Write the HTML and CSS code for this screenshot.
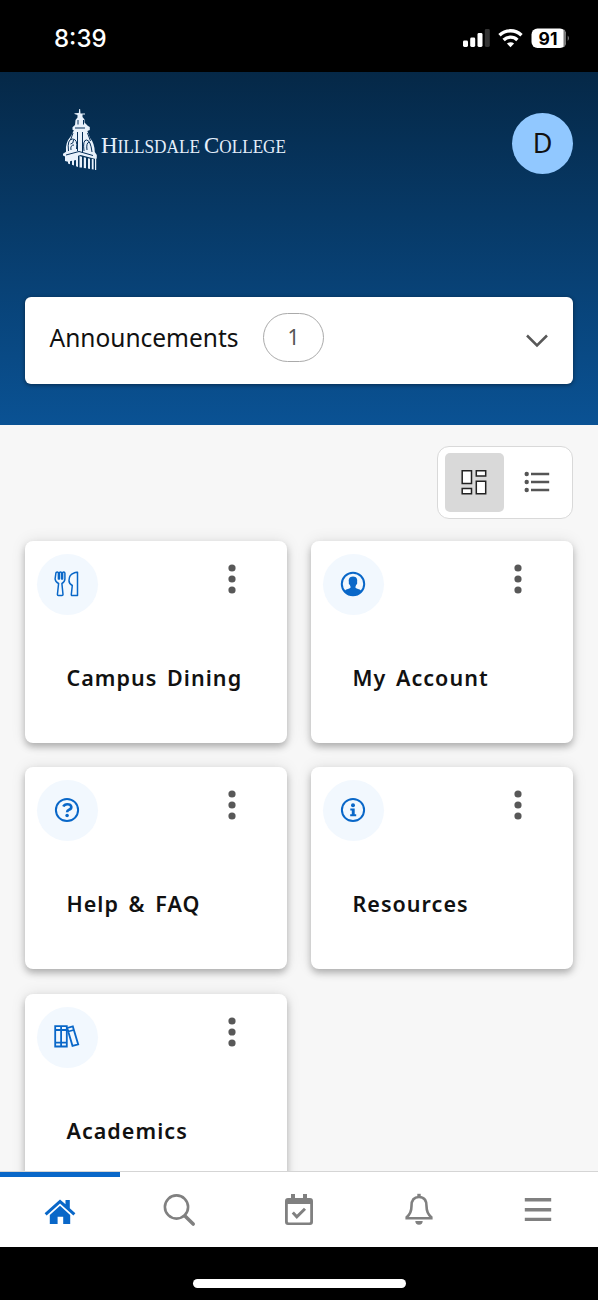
FILE: index.html
```
<!DOCTYPE html>
<html lang="en">
<head>
<meta charset="utf-8">
<title>Hillsdale College</title>
<link rel="stylesheet" href="styles.css">
</head>
<body>
<svg width="0" height="0" class="defs">
  <symbol id="dots" viewBox="0 0 8 30"><circle cx="4" cy="4" r="3.6"/><circle cx="4" cy="15" r="3.6"/><circle cx="4" cy="26" r="3.6"/></symbol>
</svg>
<div class="phone">
  <div class="status">
    <span class="time">8:39</span>
    <svg class="signals" width="108" height="24" viewBox="0 0 108 24">
      <g fill="#fff">
        <rect x="3" y="13.5" width="5" height="6.5" rx="1.4"/>
        <rect x="10.200" y="10.500" width="5" height="9.500" rx="1.400"/>
        <rect x="17.500" y="6" width="5" height="14" rx="1.400"/>
        <rect x="24.800" y="2" width="5" height="18" rx="1.400" fill="#333"/>
        <path d="M50.500 20.200l-3.600-3.600a5.200 5.200 0 0 1 7.200 0z"/>
        <rect x="71.500" y="1.500" width="34.500" height="19.500" rx="6"/>
        <path d="M103.500 2v18.500q2.500-1.500 2.500-5.500V7.500q0-4-2.500-5.500z" fill="#777"/>
        <path d="M107.700 8.500q2.600 2.500 0 5.500z" fill="#777"/>
      </g>
      <g fill="none" stroke="#fff" stroke-width="3.400">
        <path d="M39.500 8.200a16 16 0 0 1 22 0"/><path d="M43.600 12.900a10 10 0 0 1 13.800 0"/>
      </g>
      <text x="88" y="17.800" text-anchor="middle" class="battery">91</text>
    </svg>
  </div>
  <header class="hero">
    <div class="brand-row">
      <svg class="logo" width="230" height="64" viewBox="0 0 230 64">
        <g fill="#e8f1fb">
          <path d="M17.200 1h.9l.4 4.500h4.500v1h-2.500v2.500l2 2.500v3l3.500 3.500 1.800 1v3l-3 1.200h-11l-3.300-1.400v-2.600l2.500-2.200.5-5 2-2.500V7l-3-1v-.8l4.300-.2z"/>
          <path d="M12 22h13l3 8q4.500 5 4.800 14l2 3v3.500l-1.200.5-15-4L3 52v-3.500l-2-1v-1.800l3-2Q2.800 35 9 28z"/>
          <path d="M3 51l13-4v12l-2-.8V52l-2 .5v5l-2-.8v-4l-2 .5v3l-2-.7v-1.700l-3-.8zM17.500 48l2.500.7v10.800h-2.500zM21.800 49.200l2.200.6v10.500l-2.200-.3zM26 50.300l2 .5v10.200l-2-.5zM29.800 50.800l1.800.4v10.300l-1.800-.3zM33 50.500l1.200.2V62H33z"/>
        </g>
        <g fill="none" stroke="#052e58" stroke-width="1">
          <path d="M16 12v4.500M21.500 12v4.500M13 20h10"/>
          <path d="M11 25l-2.500 7M15.500 24v19M20.500 24v20M25.500 25l3 8M6.500 43q-1.500-12 4-12t4 10M8.500 36q3 0 3-4M9 42q-1-5 3-5M22 43q-1.500-11 2.500-11t5.500 12M25 42q-1-7 2-8M4 47l13-3.500 14 4"/>
        </g>
        <text class="wordmark" x="39" y="45.200" textLength="99" lengthAdjust="spacingAndGlyphs"><tspan class="initial">H</tspan>ILLSDALE</text>
        <text class="wordmark" x="142" y="45.200" textLength="82" lengthAdjust="spacingAndGlyphs"><tspan class="initial">C</tspan>OLLEGE</text>
      </svg>
      <div class="avatar">D</div>
    </div>
    <div class="announcements">
      <span class="ann-title">Announcements</span>
      <span class="count">1</span>
      <svg class="chevron" width="24" height="16" viewBox="0 0 24 16"><path d="M2 2.500l10 10 10-10" fill="none" stroke="#585858" stroke-width="2.500"/></svg>
    </div>
  </header>
  <main class="content">
    <div class="switcher">
      <div class="view active"><svg width="28" height="28" viewBox="0 0 28 28" fill="#fff" stroke="#222" stroke-width="1.500"><path d="M2.200 2.700h9.300v12.800H2.200zM16.300 2.700h9.400v5.300h-9.400zM2.200 20.500h9.300v5.300H2.200zM16.300 13.200h9.400v12.600h-9.400z"/></svg></div>
      <div class="view"><svg width="28" height="24" viewBox="0 0 28 24" fill="#555"><circle cx="3.700" cy="4" r="2.200"/><circle cx="3.700" cy="12" r="2.200"/><circle cx="3.700" cy="20" r="2.200"/><path d="M8 2.700h18.200v2.600H8zM8 10.700h18.200v2.600H8zM8 18.700h18.200v2.600H8z"/></svg></div>
    </div>
    <div class="grid">
      <article class="card">
        <div class="card-top"><span class="badge"><svg width="28" height="28" viewBox="0 0 28 28" fill="none" stroke="#0967c8" stroke-width="1.500" stroke-linejoin="round"><path d="M2.500 3q.2-1 1.300-1t1.200 1v6h1V3q0-1 1.100-1T8.200 3v6h1V3q0-1 1.100-1t1.200 1v6q-.2 3.200-3 4.500l1.100 11q0 1-1 1H5q-1 0-1-1l1.200-11Q2 12 1.700 9z" transform="translate(.4)"/><path d="M24.500 2.300v23.200h-5.300q-1 0-.9-1l1-9q-3.400-2-3.300-5 0-6 5-7.500 1.500-.9 3.500-.7z"/></svg></span><svg class="dots" width="8" height="30"><use href="#dots"/></svg></div>
        <h2>Campus Dining</h2>
      </article>
      <article class="card">
        <div class="card-top"><span class="badge"><svg width="28" height="28" viewBox="0 0 28 28"><circle cx="14" cy="14" r="11.200" fill="none" stroke="#0967c8" stroke-width="2"/><path d="M14 6.500c-3.800 0-4.600 3-4.100 5.500-.4 1.700.3 2.500.9 2.800l.8 2.200c.2 2-5 1.700-6.100 4.200Q9 25.600 14 25.600t8.500-4.400C21.400 18.700 16.200 19 16.400 17l.8-2.200c.6-.3 1.300-1.100.9-2.800.5-2.500-.3-5.500-4.100-5.500z" fill="#0967c8"/></svg></span><svg class="dots" width="8" height="30"><use href="#dots"/></svg></div>
        <h2>My Account</h2>
      </article>
      <article class="card">
        <div class="card-top"><span class="badge"><svg width="28" height="28" viewBox="0 0 28 28" fill="none" stroke="#0967c8"><circle cx="14" cy="14" r="11.100" stroke-width="2"/><path d="M10.300 10.500q1.200-2.300 3.900-2.300c5 0 5.200 4.400 1.800 5.500q-1.900.7-1.900 2.500" stroke-width="2.600"/><circle cx="14.100" cy="19.500" r="1.800" fill="#0967c8" stroke="none"/></svg></span><svg class="dots" width="8" height="30"><use href="#dots"/></svg></div>
        <h2>Help &amp; FAQ</h2>
      </article>
      <article class="card">
        <div class="card-top"><span class="badge"><svg width="28" height="28" viewBox="0 0 28 28" fill="#0967c8"><circle cx="14" cy="14" r="11.100" fill="none" stroke="#0967c8" stroke-width="2"/><circle cx="14" cy="9.300" r="2"/><path d="M11.300 12.500h4.400v5.700h1.500v2h-6v-2h1.600v-3.700h-1.500z"/></svg></span><svg class="dots" width="8" height="30"><use href="#dots"/></svg></div>
        <h2>Resources</h2>
      </article>
      <article class="card">
        <div class="card-top"><span class="badge"><svg width="28" height="28" viewBox="0 0 28 28" fill="none" stroke="#0967c8" stroke-width="1.800"><path d="M2.200 4.100h5.900v20.400H2.200zM8.100 4.100h5.700v20.400H8.100zM2.200 8h11.400M2.200 20.700h11.400"/><path d="M14.200 6l5.600-1.600 5.400 18-5.700 1.400zM15.200 9.500l5.600-1.500"/></svg></span><svg class="dots" width="8" height="30"><use href="#dots"/></svg></div>
        <h2>Academics</h2>
      </article>
    </div>
  </main>
  <nav class="tabs">
    <div class="tab current"><svg width="32" height="34" viewBox="0 0 32 34" fill="#0967c8"><path d="M.6 20.300L16 6.500l5.500 4.800V7h4.300v8.200l5.600 5.100-2 2.200L16 10.500 2.600 22.500z"/><path d="M5.800 22L16 12.800 26.200 22v9h-7V23.700h-5.600V31H5.800z"/></svg></div>
    <div class="tab"><svg width="34" height="34" viewBox="0 0 34 34" fill="none" stroke="#808080"><circle cx="14.500" cy="14" r="11.600" stroke-width="2.600"/><path d="M23 23l8.200 8" stroke-width="3.600" stroke-linecap="round"/></svg></div>
    <div class="tab"><svg width="32" height="34" viewBox="0 0 32 34" fill="#808080"><path d="M8 1h4v4h8V1h4v4h3q3 0 3 3v21q0 3-3 3H5q-3 0-3-3V8q0-3 3-3h3zM4.800 11v17.500q0 1 1 1h20.400q1 0 1-1V11z" fill-rule="evenodd"/><path d="M9.800 19.500l4 4.300 8.200-8" fill="none" stroke="#808080" stroke-width="3"/></svg></div>
    <div class="tab"><svg width="32" height="34" viewBox="0 0 32 34" fill="none" stroke="#808080" stroke-width="2.600"><path d="M16 4C9.500 4 8.500 9 8.500 13c0 6-1.500 8.500-4.800 11.200v1.100h24.600v-1.100C25 21.500 23.500 19 23.500 13c0-4-1-9-7.500-9z"/><path d="M16 .8v3.500" stroke-width="3.400"/><path d="M12.300 28h7.400a3.700 3.700 0 0 1-7.400 0z" fill="#808080" stroke="none"/></svg></div>
    <div class="tab"><svg width="28" height="34" viewBox="0 0 28 34" fill="#808080"><path d="M.8 5.100h26.400v3.300H.8zM.8 15.100h26.400v3.300H.8zM.8 24.700h26.400V28H.8z"/></svg></div>
  </nav>
  <div class="home-area"><div class="home-bar"></div></div>
</div>
</body>
</html>
```
FILE: styles.css
```
* { box-sizing: border-box; }
body { margin: 0; background: #000; font-family: "Noto Sans", sans-serif; color: #111; }
.defs { position: absolute; }
svg { display: block; flex: none; }
.phone { width: 598px; height: 1300px; display: flex; flex-direction: column; overflow: hidden; }
.status { height: 72px; flex: none; padding: 0 29px 0 54px; display: flex; justify-content: space-between; align-items: flex-start; background: #000; }
.time { color: #fff; font: 500 24px/29px Inter, sans-serif; padding-top: 24px; }
.signals { margin-top: 27px; width: 110px; overflow: visible; }
.battery { font: 700 17.500px Inter, sans-serif; fill: #000; }
.hero { height: 353px; flex: none; padding: 36px 25px 0; background: linear-gradient(#052847, #0a5294); }
.brand-row { display: flex; justify-content: space-between; height: 189px; padding-left: 37px; }
.wordmark { font: 18px "Liberation Serif", serif; fill: #e4eefa; }
.initial { font-size: 24px; }
.avatar { width: 61px; height: 61px; margin-top: 5px; border-radius: 50%; background: #91c8ff; font-size: 27px; line-height: 60px; text-align: center; }
.announcements { height: 87px; background: #fff; border-radius: 6px; display: flex; align-items: flex-start; padding: 16px 24.500px 0 24.500px; box-shadow: 0 1px 4px rgba(0,0,0,.45); }
.ann-title { font-size: 24.500px; line-height: 49px; width: 213.500px; white-space: nowrap; }
.count { width: 61px; height: 49px; border: 1.500px solid #aaa; border-radius: 25px; font-size: 21px; line-height: 47px; text-align: center; color: #555; }
.chevron { margin: 20px 0 0 auto; }
.content { height: 746px; flex: none; background: #f7f7f7; padding: 21px 25px 0; overflow: hidden; }
.switcher { width: 136px; height: 73px; margin-left: auto; border: 1.500px solid #d9d9d9; border-radius: 12px; background: #fff; display: flex; padding: 6px 7px; gap: 4px; }
.view { width: 59px; height: 59px; flex: none; border-radius: 5px; display: flex; align-items: center; justify-content: center; }
.view svg { margin: -1px 1px 0 0; }
.view.active { background: #d9d9d9; }
.grid { display: grid; grid-template-columns: 262px 262px; grid-auto-rows: 202px; row-gap: 24.300px; margin-top: 22px; justify-content: space-between; }
.card { background: #fff; border-radius: 8px; padding: 13px 0 0 12.400px; box-shadow: 0 4px 7px rgba(0,0,0,.26), 0 0 16px rgba(0,0,0,.09); }
.card-top { display: flex; justify-content: space-between; height: 61px; padding-right: 51.500px; }
.badge { width: 61px; height: 61px; border-radius: 50%; background: #f2f8fe; display: flex; align-items: center; justify-content: center; }
.badge svg { margin: -2px 1px 0 0; }
.dots { margin-top: 10px; fill: #585858; }
.card h2 { margin: 48px 0 0 29px; font-size: 21.500px; line-height: 30px; font-weight: 600; letter-spacing: 1.050px; word-spacing: 3px; white-space: nowrap; }
.tabs { height: 76px; flex: none; display: grid; grid-template-columns: repeat(5, 1fr); background: #fff; border-top: 1px solid #d5d5d5; }
.tab { display: flex; justify-content: center; padding-top: 21px; }
.tab.current { border-top: 5px solid #0967c8; padding-top: 16px; }
.home-area { flex: 1; display: flex; justify-content: center; padding-top: 32px; }
.home-bar { width: 213px; height: 9px; border-radius: 5px; background: #fff; }
```
